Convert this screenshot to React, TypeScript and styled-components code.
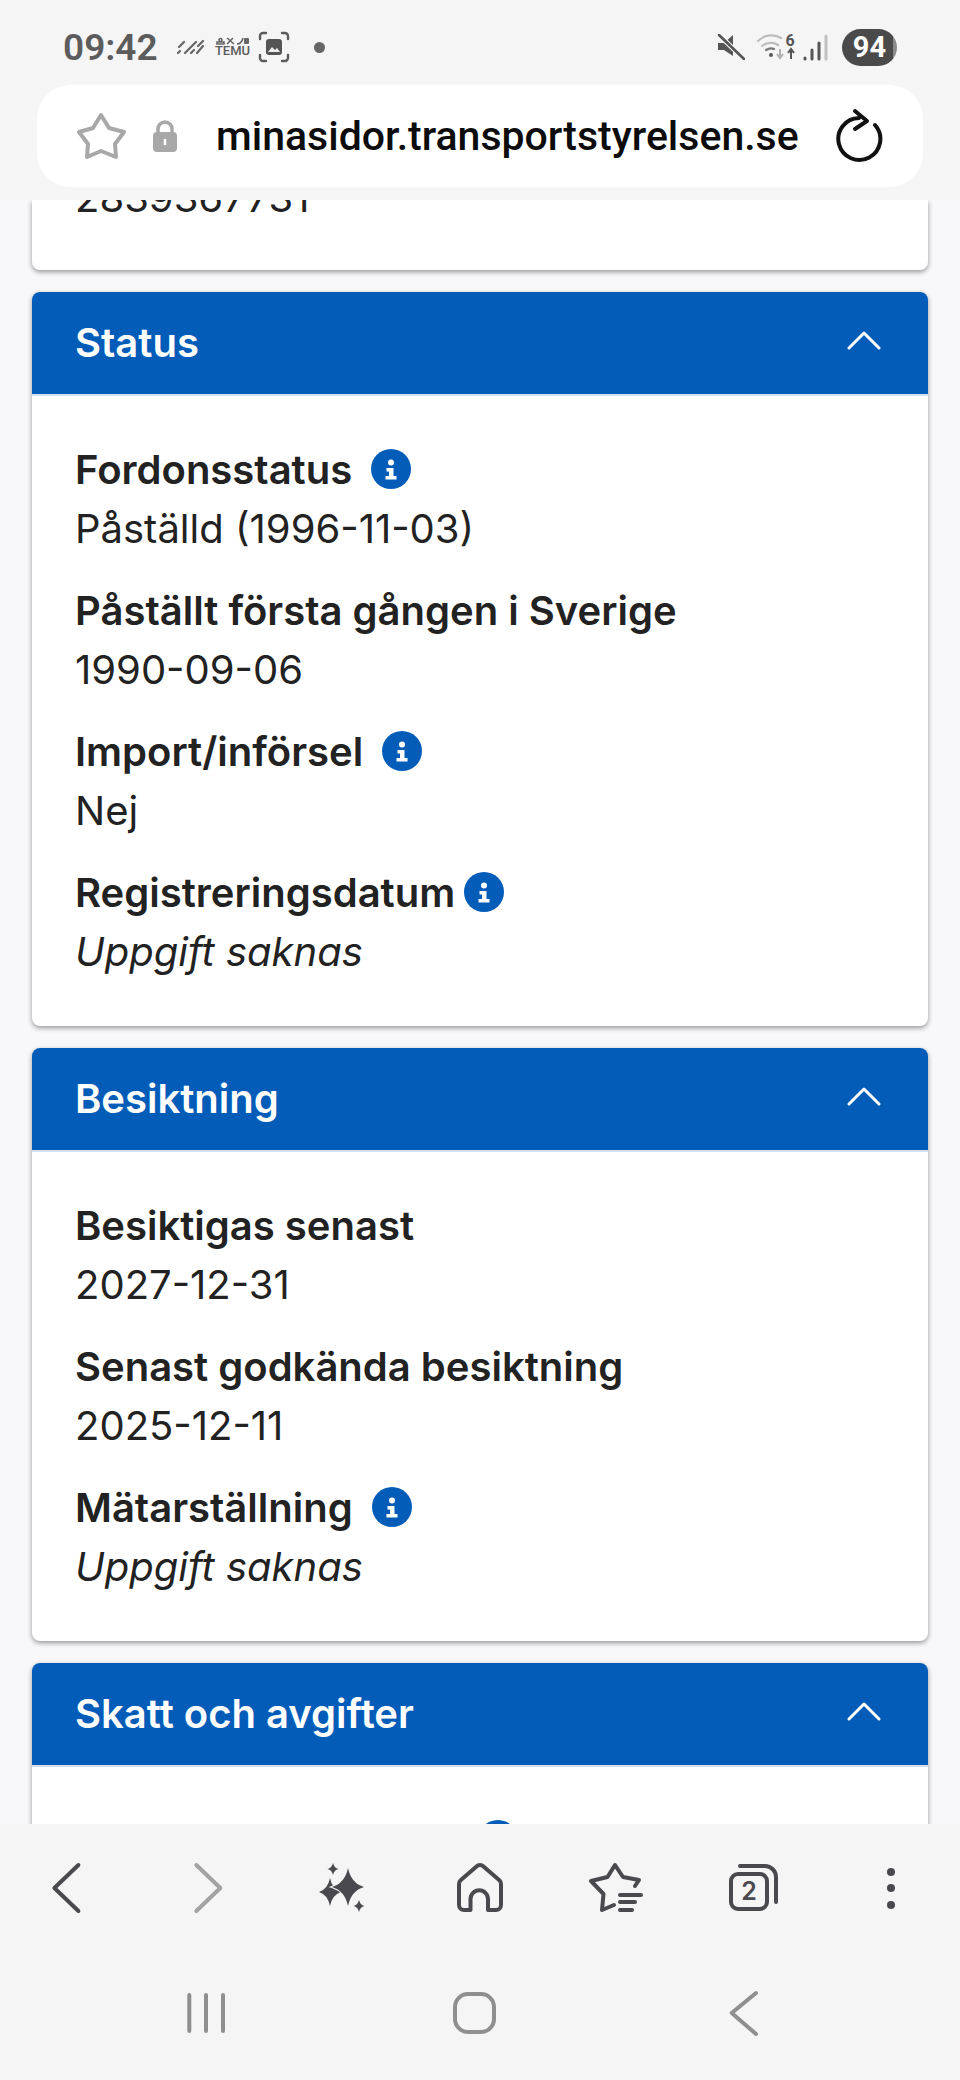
import React from 'react';
import styled, {createGlobalStyle} from 'styled-components';

const GlobalStyle = createGlobalStyle`
	html, body {
		margin: 0;
		padding: 0;
		background: #f5f5f6;
	}
	* {
		box-sizing: border-box;
	}
`;

const Page = styled.div`
	width: 960px;
	height: 2080px;
	display: flex;
	flex-direction: column;
	overflow: hidden;
	font-family: Inter, "Liberation Sans", sans-serif;
	background: #f8f8fb;
`;

const TopChrome = styled.header`
	height: 200px;
	flex: none;
	background: #f5f5f6;
	position: relative;
	z-index: 2;
`;

const StatusBar = styled.div`
	height: 85px;
	padding: 9px 63px 0 63px;
	display: flex;
	align-items: center;
`;

const Clock = styled.span`
	font-family: Roboto, sans-serif;
	font-size: 37px;
	font-weight: 600;
	color: #5c5c5c;
	width: 95px;
	margin-right: 19px;
	white-space: nowrap;
`;

const TemuMark = styled.div`
	width: 35px;
	margin: 0 8px 0 10px;
	display: flex;
	flex-direction: column;
	align-items: center;
	font-family: Roboto, sans-serif;
	font-size: 13px;
	line-height: 12px;
	font-weight: 500;
	color: #5c5c5c;
`;

const NoticeDot = styled.span`
	width: 11px;
	height: 11px;
	margin-left: 24px;
	border-radius: 50%;
	background: #666;
`;

const StatusRight = styled.div`
	margin-left: auto;
	display: flex;
	align-items: center;
`;

const WifiIcon = styled.svg`
	margin-left: 12px;
`;

const SignalIcon = styled.svg`
	margin-left: 6px;
`;

const Battery = styled.span`
	width: 55px;
	height: 37px;
	margin-left: 14px;
	border-radius: 19px;
	background: linear-gradient(90deg, #4a4a4a 92%, #8a8a8a 92%);
	color: #fff;
	font-family: Roboto, sans-serif;
	font-size: 29px;
	font-weight: 700;
	display: flex;
	align-items: center;
	justify-content: center;
`;

const UrlBar = styled.div`
	height: 102px;
	margin: 0 37px;
	padding: 0 38px 0 37px;
	border-radius: 34px;
	background: #fff;
	display: flex;
	align-items: center;
`;

const LockIcon = styled.svg`
	margin-left: 23px;
`;

const UrlText = styled.span`
	margin-left: 39px;
	font-family: Roboto, sans-serif;
	font-size: 41px;
	font-weight: 500;
	color: #0c0c0c;
	white-space: nowrap;
`;

const ReloadSlot = styled.span`
	margin-left: auto;
	display: flex;
`;

const Content = styled.main`
	flex: 1;
	min-height: 0;
	overflow: hidden;
	padding: 0 32px;
	display: flex;
	flex-direction: column;
	gap: 22px;
`;

const Card = styled.section`
	flex: none;
	background: #fff;
	border-radius: 8px;
	box-shadow: 0 2px 5px rgba(0, 0, 0, 0.4);
`;

const IdCard = styled(Card)`
	padding: 0 43px 42px;
	border-radius: 0 0 8px 8px;
`;

const CardHeader = styled.div`
	height: 104px;
	padding: 0 46px 2px 43px;
	border-radius: 8px 8px 0 0;
	border-bottom: 2px solid #d3e0ee;
	background: #045cb9;
	display: flex;
	align-items: center;
	justify-content: space-between;
`;

const CardTitle = styled.h2`
	margin: 0;
	font-size: 40px;
	font-weight: 600;
	color: #fff;
`;

const CardBody = styled.div`
	padding: 43px 43px 44px;
	display: flex;
	flex-direction: column;
	gap: 21px;
`;

const Field = styled.div`
	display: flex;
	flex-direction: column;
`;

const Label = styled.div<{$iconGap: number}>`
	height: 60px;
	display: flex;
	align-items: center;
	gap: ${p => p.$iconGap}px;
	font-size: 40px;
	font-weight: 600;
	color: #222;
	white-space: nowrap;
`;

const Value = styled.div<{$missing?: boolean}>`
	height: 60px;
	line-height: 60px;
	font-size: 40px;
	font-weight: 400;
	font-style: ${p => (p.$missing ? 'italic' : 'normal')};
	color: #222;
`;

const IdValue = styled(Value)`
	margin-top: -32px;
`;

const BottomChrome = styled.footer`
	height: 256px;
	flex: none;
	background: #f5f5f6;
	position: relative;
	z-index: 2;
`;

const Toolbar = styled.nav`
	height: 94px;
	padding-top: 34px;
	display: grid;
	grid-template-columns: repeat(7, 1fr);
	justify-items: center;
`;

const SystemNav = styled.nav`
	margin-top: 65px;
	display: grid;
	grid-template-columns: repeat(3, 270px);
	justify-content: center;
	justify-items: center;
`;

const InfoIcon = () => (
	<svg width="40" height="40" viewBox="0 0 40 40">
		<circle cx="20" cy="20" r="20" fill="#045cb9"/>
		<circle cx="20" cy="13.500" r="3" fill="#fff"/>
		<path d="M15.500 19h7v8h3v3.500h-11V27h3.500v-4.500h-2.500z" fill="#fff"/>
	</svg>
);

const ChevronUp = () => (
	<svg width="36" height="22" viewBox="0 0 36 22">
		<path d="M3 17 18 2l15 15" fill="none" stroke="#fff" strokeWidth="3" strokeLinecap="round" strokeLinejoin="round"/>
	</svg>
);

const star4 = (cx: number, cy: number, rx: number, ry: number) =>
	`M${cx} ${cy - ry}Q${cx + rx * 0.2} ${cy - ry * 0.2} ${cx + rx} ${cy}Q${cx + rx * 0.2} ${cy + ry * 0.2} ${cx} ${cy + ry}Q${cx - rx * 0.2} ${cy + ry * 0.2} ${cx - rx} ${cy}Q${cx - rx * 0.2} ${cy - ry * 0.2} ${cx} ${cy - ry}Z`;

const INK = '#4a4a4e';
const SOFT = '#8f8f8f';

const icon = {
	fill: 'none',
	strokeWidth: 4,
	strokeLinecap: 'round',
	strokeLinejoin: 'round',
} as const;

const toolbarIcons = [
	<path key="back" d="M39.400 7 15.400 30l24 23" {...icon} stroke={INK}/>,
	<path key="forward" d="M20.300 7l24 23-24 23" {...icon} stroke="#a3a3a3"/>,
	<g key="sparkle" fill={INK}>
		<path d={star4(17, 34, 11, 14)}/>
		<path d={star4(35, 29, 16, 19)} stroke="#f5f5f6" strokeWidth="2" paintOrder="stroke"/>
		<path d={star4(20, 11, 5.500, 6)}/>
		<path d={star4(46, 48, 5.500, 6)}/>
	</g>,
	<path key="home" d="M20.500 52H14a5 5 0 0 1-5-5V26a5 5 0 0 1 1.600-3.700L26.500 8.500a5 5 0 0 1 7 0L49.400 22.300A5 5 0 0 1 51 26V47a5 5 0 0 1-5 5H38V41a8.500 8.500 0 0 0-17.500 0z" {...icon} stroke={INK}/>,
	<g key="favourites" {...icon} stroke={INK}>
		<path d="M27 47 15 52l1.500-16L4 23l16.500-4L28 7l8 12 16 3-4 6"/>
		<path d="M33 37h21M33 44h15M33 52h12"/>
	</g>,
	<g key="tabs" {...icon} stroke={INK}>
		<rect x="7" y="16" width="36" height="35" rx="7"/>
		<path d="M16 8h25a11 11 0 0 1 11 11v25"/>
		<text x="25" y="42" textAnchor="middle" fontFamily="Inter, sans-serif" fontSize="25" fontWeight="600" fill={INK} stroke="none">2</text>
	</g>,
	<g key="more" fill={INK}>
		<circle cx="30" cy="14" r="4"/>
		<circle cx="30" cy="30" r="4"/>
		<circle cx="30" cy="47" r="4"/>
	</g>,
];

const systemIcons = [
	<path key="recents" d="M9.300 12v36M26 12v36M43 12v36" {...icon} stroke={SOFT}/>,
	<rect key="home" x="5" y="11" width="39" height="38" rx="13" {...icon} stroke={SOFT}/>,
	<path key="back" d="M36 10 11.700 30 36 51" {...icon} stroke={SOFT}/>,
];

const sections = [
	{
		title: 'Status',
		fields: [
			{label: 'Fordonsstatus', info: 19, value: 'Påställd (1996-11-03)'},
			{label: 'Påställt första gången i Sverige', value: '1990-09-06'},
			{label: 'Import/införsel', info: 19, value: 'Nej'},
			{label: 'Registreringsdatum', info: 9, value: 'Uppgift saknas', missing: true},
		],
	},
	{
		title: 'Besiktning',
		fields: [
			{label: 'Besiktigas senast', value: '2027-12-31'},
			{label: 'Senast godkända besiktning', value: '2025-12-11'},
			{label: 'Mätarställning', info: 19, value: 'Uppgift saknas', missing: true},
		],
	},
	{
		title: 'Skatt och avgifter',
		fields: [
			{label: 'Skattepliktigt fordon', info: 11, value: ''},
		],
	},
];

const App = () => {
	return (
		<Page>
			<GlobalStyle/>
			<TopChrome>
				<StatusBar>
					<Clock>09:42</Clock>
					<svg width="28" height="16" viewBox="0 0 28 16">
						<path d="M2 8l5-5M1 14l2-2M8 14 19 3M14 14l3-3M21 7l5-5M20 14l6-7" fill="none" stroke="#666" strokeWidth="2.200" strokeLinecap="round"/>
					</svg>
					<TemuMark>
						<svg width="34" height="8" viewBox="0 0 34 8">
							<path d="M1 7h7V5H1zM3 3a1.500 1.500 0 1 0 3 0 1.500 1.500 0 0 0-3 0zM11 1l7 6M17 1l-6 6M21 7c3 0 5-2 6-6" fill="none" stroke="#666" strokeWidth="1.600"/>
							<rect x="28" y="1" width="5" height="6" rx="1" fill="#666"/>
						</svg>
						TEMU
					</TemuMark>
					<svg width="32" height="32" viewBox="0 0 32 32">
						<path d="M2 8V5a3 3 0 0 1 3-3h3M24 2h3a3 3 0 0 1 3 3v3M30 24v3a3 3 0 0 1-3 3h-3M8 30H5a3 3 0 0 1-3-3v-3" fill="none" stroke="#5c5c5c" strokeWidth="2.400" strokeLinecap="round"/>
						<rect x="8" y="8" width="16" height="16" rx="3" fill="#555"/>
						<path d="M10 21l4-5 3 3 2-2 3 4z" fill="#eee"/>
					</svg>
					<NoticeDot/>
					<StatusRight>
						<svg width="28" height="26" viewBox="0 0 28 26">
							<path d="M1 9h6l9-8v21l-9-6H1z" fill="#555"/>
							<path d="M3 2l24 23" stroke="#f5f5f6" strokeWidth="5"/>
							<path d="M2 1l25 24" stroke="#555" strokeWidth="2.600" strokeLinecap="round"/>
						</svg>
						<WifiIcon width="40" height="28" viewBox="0 0 40 28">
							<path d="M1 8c7-7 17-7 23-3M5 13c5-4 12-4 16-1" fill="none" stroke="#bdbdbd" strokeWidth="2.200" strokeLinecap="round"/>
							<path d="M9 17c3-2 6-2 8-1" fill="none" stroke="#777" strokeWidth="2.200" strokeLinecap="round"/>
							<circle cx="14" cy="22" r="2" fill="#555"/>
							<path d="M23 16v8m-3-3 3 4 3-4" fill="none" stroke="#b0b0b0" strokeWidth="2"/>
							<path d="M34 26v-9m-3 3 3-4 3 4" fill="none" stroke="#555" strokeWidth="2"/>
							<text x="33" y="13" textAnchor="middle" fontFamily="Roboto, sans-serif" fontSize="16" fontWeight="700" fill="#555">6</text>
						</WifiIcon>
						<SignalIcon width="25" height="27" viewBox="0 0 25 27">
							<path d="M2 24v1M9 16v9M16 9v16" stroke="#555" strokeWidth="3" strokeLinecap="round"/>
							<path d="M23 2v23" stroke="#c2c2c2" strokeWidth="3" strokeLinecap="round"/>
						</SignalIcon>
						<Battery>94</Battery>
					</StatusRight>
				</StatusBar>
				<UrlBar>
					<svg width="56" height="52" viewBox="0 0 56 52">
						<path d="M27 5l8 13 15 4-9 12 1 13-15-6-14 6 1-13-9-12 14-4z" fill="none" stroke="#a8a8a8" strokeWidth="4" strokeLinejoin="round"/>
					</svg>
					<LockIcon width="24" height="32" viewBox="0 0 24 32">
						<path d="M5 13V9a7 7 0 0 1 14 0v4" fill="none" stroke="#a8a8a8" strokeWidth="3.500"/>
						<rect y="12" width="24" height="20" rx="4" fill="#a8a8a8"/>
						<path d="M12 19v6" stroke="#fff" strokeWidth="2.500"/>
					</LockIcon>
					<UrlText>minasidor.transportstyrelsen.se</UrlText>
					<ReloadSlot>
						<svg width="50" height="56" viewBox="0 0 50 56">
							<path d="M40 17A21 21 0 1 1 24 10" fill="none" stroke="#111" strokeWidth="4" strokeLinecap="round"/>
							<path d="M20 3l12 10-12 8" fill="none" stroke="#111" strokeWidth="4" strokeLinecap="round" strokeLinejoin="round"/>
						</svg>
					</ReloadSlot>
				</UrlBar>
			</TopChrome>
			<Content>
				<IdCard>
					<IdValue>2839367731</IdValue>
				</IdCard>
				{sections.map(s => (
					<Card key={s.title}>
						<CardHeader>
							<CardTitle>{s.title}</CardTitle>
							<ChevronUp/>
						</CardHeader>
						<CardBody>
							{s.fields.map(f => (
								<Field key={f.label}>
									<Label $iconGap={f.info ?? 0}>
										{f.label}
										{f.info && <InfoIcon/>}
									</Label>
									<Value $missing={f.missing}>{f.value}</Value>
								</Field>
							))}
						</CardBody>
					</Card>
				))}
			</Content>
			<BottomChrome>
				<Toolbar>
					{toolbarIcons.map(i => (
						<svg key={i.key} width="60" height="60" viewBox="0 0 60 60">{i}</svg>
					))}
				</Toolbar>
				<SystemNav>
					{systemIcons.map(i => (
						<svg key={i.key} width="60" height="60" viewBox="0 0 60 60">{i}</svg>
					))}
				</SystemNav>
			</BottomChrome>
		</Page>
	);
};

export default App;
